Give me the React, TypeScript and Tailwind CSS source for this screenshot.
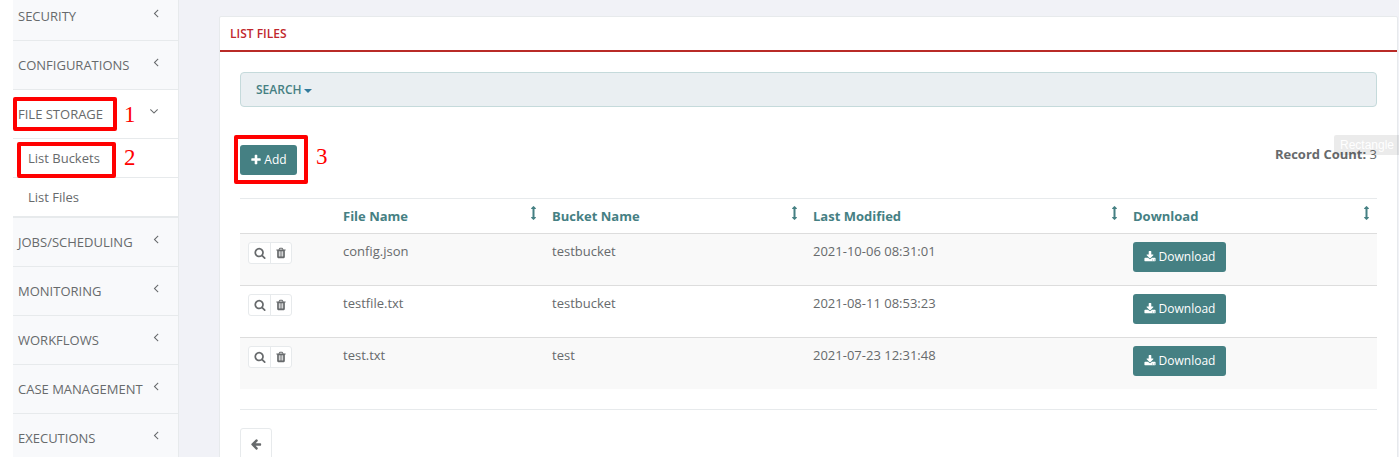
import React from "react";

const ICONS = {
  angleLeft:
    "M1203 544q0 13-10 23l-393 393 393 393q10 10 10 23t-10 23l-50 50q-10 10-23 10t-23-10l-466-466q-10-10-10-23t10-23l466-466q10-10 23-10t23 10l50 50q10 10 10 23z",
  angleDown:
    "M1395 736q0 13-10 23l-466 466q-10 10-23 10t-23-10l-466-466q-10-10-10-23t10-23l50-50q10-10 23-10t23 10l393 393 393-393q10-10 23-10t23 10l50 50q10 10 10 23z",
  plus: "M1600 736v192q0 40-28 68t-68 28h-416v416q0 40-28 68t-68 28h-192q-40 0-68-28t-28-68v-416h-416q-40 0-68-28t-28-68v-192q0-40 28-68t68-28h416v-416q0-40 28-68t68-28h192q40 0 68 28t28 68v416h416q40 0 68 28t28 68z",
  search:
    "M1216 832q0-185-131.5-316.5t-316.5-131.5-316.5 131.5-131.5 316.5 131.5 316.5 316.5 131.5 316.5-131.5 131.5-316.5zm512 832q0 52-38 90t-90 38q-54 0-90-38l-343-342q-179 124-399 124-143 0-273.5-55.5t-225-150-150-225-55.5-273.5 55.5-273.5 150-225 225-150 273.5-55.5 273.5 55.5 225 150 150 225 55.5 273.5q0 220-124 399l343 343q37 37 37 90z",
  trash:
    "M704 1376v-704q0-14-9-23t-23-9h-64q-14 0-23 9t-9 23v704q0 14 9 23t23 9h64q14 0 23-9t9-23zm256 0v-704q0-14-9-23t-23-9h-64q-14 0-23 9t-9 23v704q0 14 9 23t23 9h64q14 0 23-9t9-23zm256 0v-704q0-14-9-23t-23-9h-64q-14 0-23 9t-9 23v704q0 14 9 23t23 9h64q14 0 23-9t9-23zm-544-992h448l-48-117q-7-9-17-11h-317q-10 2-17 11zm928 32v64q0 14-9 23t-23 9h-96v948q0 83-47 143.5t-113 60.5h-832q-66 0-113-58.5t-47-141.5v-952h-96q-14 0-23-9t-9-23v-64q0-14 9-23t23-9h309l70-167q15-37 54-63t79-26h320q40 0 79 26t54 63l70 167h309q14 0 23 9t9 23z",
  download:
    "M1344 1344q0-26-19-45t-45-19-45 19-19 45 19 45 45 19 45-19 19-45zm256 0q0-26-19-45t-45-19-45 19-19 45 19 45 45 19 45-19 19-45zm128-224v320q0 40-28 68t-68 28h-1472q-40 0-68-28t-28-68v-320q0-40 28-68t68-28h465l135 136q58 56 136 56t136-56l136-136h464q40 0 68 28t28 68zm-325-569q17 41-14 70l-448 448q-18 19-45 19t-45-19l-448-448q-31-29-14-70 17-39 59-39h256v-448q0-26 19-45t45-19h256q26 0 45 19t19 45v448h256q42 0 59 39z",
  arrowLeft:
    "M1664 896v128q0 53-32.5 90.5t-84.5 37.5h-704l293 294q38 36 38 90t-38 90l-75 76q-37 37-90 37-52 0-91-37l-651-652q-37-37-37-90 0-52 37-91l651-650q38-38 91-38 52 0 90 38l75 74q38 38 38 91t-38 91l-293 293h704q52 0 84.5 37.5t32.5 90.5z",
  sort: "M1152 320q0 26-19 45t-45 19h-128v1024h128q26 0 45 19t19 45-19 45l-256 256q-19 19-45 19t-45-19l-256-256q-19-19-19-45t19-45 45-19h128v-1024h-128q-26 0-45-19t-19-45 19-45l256-256q19-19 45-19t45 19l256 256q19 19 19 45z",
};

function Icon({ name, className }: { name: keyof typeof ICONS; className: string }) {
  return (
    <svg viewBox="0 0 1792 1792" fill="currentColor" className={`shrink-0 ${className}`}>
      <path d={ICONS[name]} />
    </svg>
  );
}

function MenuItem({ label, open }: { label: string; open?: boolean }) {
  return (
    <div
      className={`flex h-[49px] shrink-0 items-center justify-between border-b border-[#e7eaec] pl-[5px] ${
        open ? "bg-white pr-[17px]" : "bg-[#f8f9fb] pr-[15.5px]"
      }`}
    >
      <span className="whitespace-nowrap">{label}</span>
      <Icon name={open ? "angleDown" : "angleLeft"} className="mb-[6px] size-[14px]" />
    </div>
  );
}

const COLUMNS = ["File Name", "Bucket Name", "Last Modified", "Download"];

const FILES = [
  { name: "config.json", bucket: "testbucket", modified: "2021-10-06 08:31:01" },
  { name: "testfile.txt", bucket: "testbucket", modified: "2021-08-11 08:53:23" },
  { name: "test.txt", bucket: "test", modified: "2021-07-23 12:31:48" },
];

const GRID = "grid grid-cols-[95px_209px_261px_320px_252px]";

export default function App() {
  return (
    <div className="relative flex h-[457px] w-[1399px] overflow-hidden bg-[#f1f2f7] font-['Open_Sans',sans-serif] text-[13px] leading-5 text-[#676a6c]">
      <div className="w-[13px] shrink-0 bg-white" />
      <nav className="flex w-[166px] shrink-0 flex-col border-r border-[#e7eaec] bg-[#f8f9fb]">
        <div className="-mt-[8px] flex flex-col">
          <MenuItem label="SECURITY" />
          <MenuItem label="CONFIGURATIONS" />
          <MenuItem label="FILE STORAGE" open />
          <div className="flex h-[39px] items-center border-b border-[#e7eaec] bg-white pl-[15px]">List Buckets</div>
          <div className="flex h-[40px] items-center border-b-2 border-[#e7eaec] bg-white pl-[15px]">List Files</div>
          <MenuItem label="JOBS/SCHEDULING" />
          <MenuItem label="MONITORING" />
          <MenuItem label="WORKFLOWS" />
          <MenuItem label="CASE MANAGEMENT" />
          <MenuItem label="EXECUTIONS" />
        </div>
      </nav>

      <main className="ml-[40px] mt-[16px] flex h-[460px] w-[1179px] shrink-0 flex-col rounded-t-[2px] border border-[#e7eaec] bg-white">
        <header className="flex h-[35px] shrink-0 items-center border-b-2 border-[#b92b27] pl-[10px] text-[12px] font-semibold text-[#c1272d]">
          LIST FILES
        </header>
        <div className="flex flex-col px-[20px] pt-[20px]">
          <div className="flex h-[35px] items-center gap-[2px] rounded-[4px] border border-[#c5dadb] bg-[#eaeff2] pl-[15px] text-[12px] font-semibold text-[#458083]">
            SEARCH
            <svg viewBox="0 0 8 4" className="mt-[2px] h-[4px] w-[8px]">
              <path d="M0 0h8L4 4z" fill="#337a9b" />
            </svg>
          </div>

          <div className="mt-[38px] flex h-[30px] items-start justify-between">
            <button className="flex h-[30px] w-[57px] items-center justify-center gap-[2px] rounded-[3px] bg-[#458083] text-[12px] text-white">
              <Icon name="plus" className="size-[12px]" />
              Add
            </button>
            <p className="-mt-px">
              <b className="font-bold">Record Count:</b> 3
            </p>
          </div>

          <div className="mt-[23px] flex flex-col">
            <div className={`${GRID} h-[36px] border-y border-t-[#e7eaec] border-b-[#dddddd] font-bold text-[#458083]`}>
              <div />
              {COLUMNS.map((column) => (
                <div key={column} className="flex justify-between pl-[8px] pr-[3.5px] pt-[7px]">
                  {column}
                  <Icon name="sort" className="size-[14px]" />
                </div>
              ))}
            </div>
            {FILES.map((file, i) => (
              <div
                key={file.name}
                className={`${GRID} ${i < 2 ? "h-[52px] border-b border-[#dddddd]" : "h-[51px]"} ${
                  i % 2 === 0 ? "bg-[#f9f9f9]" : "bg-white"
                }`}
              >
                <div className="pl-[8px] pt-[8px]">
                  <div className="flex h-[22px] w-[44px] rounded-[3px] border border-[#e7eaec] bg-white">
                    <button className="flex w-[22px] items-center justify-center border-r border-[#e7eaec]">
                      <Icon name="search" className="size-[12px]" />
                    </button>
                    <button className="flex flex-1 items-center justify-center">
                      <Icon name="trash" className="size-[12px]" />
                    </button>
                  </div>
                </div>
                <div className="pl-[8px] pt-[7px]">{file.name}</div>
                <div className="pl-[8px] pt-[7px]">{file.bucket}</div>
                <div className="pl-[8px] pt-[7px]">{file.modified}</div>
                <div className="pl-[8px] pt-[8px]">
                  <button className="flex h-[30px] w-[93px] items-center justify-center gap-[3px] rounded-[3px] bg-[#458083] text-[12px] text-white">
                    <Icon name="download" className="size-[12px]" />
                    Download
                  </button>
                </div>
              </div>
            ))}
          </div>

          <div className="mt-[20px] border-t border-[#e7eaec]" />
          <button className="mt-[18px] flex h-[32px] w-[32px] items-center justify-center rounded-[3px] border border-[#e7eaec] bg-white">
            <Icon name="arrowLeft" className="size-[12px]" />
          </button>
        </div>
      </main>

      <div className="absolute left-[13px] top-[97px] h-[34px] w-[104px] rounded-[2px] border-4 border-[#ff0000]" />
      <div className="absolute left-[17px] top-[142px] h-[36px] w-[99px] rounded-[2px] border-4 border-[#ff0000]" />
      <div className="absolute left-[234px] top-[135px] h-[49px] w-[74px] rounded-[2px] border-4 border-[#ff0000]" />
      <span className="absolute left-[124px] top-[103px] font-['Liberation_Serif',serif] text-[23px] leading-6 text-[#ff0000]">1</span>
      <span className="absolute left-[124px] top-[146px] font-['Liberation_Serif',serif] text-[23px] leading-6 text-[#ff0000]">2</span>
      <span className="absolute left-[316px] top-[145px] font-['Liberation_Serif',serif] text-[23px] leading-6 text-[#ff0000]">3</span>
      <div className="absolute left-[1334px] top-[135px] flex h-[20px] w-[65px] items-center rounded-l-[2px] bg-black/8 pl-[6px] font-['Liberation_Sans',sans-serif] text-[12px] text-white">
        Rectangle
      </div>
    </div>
  );
}
